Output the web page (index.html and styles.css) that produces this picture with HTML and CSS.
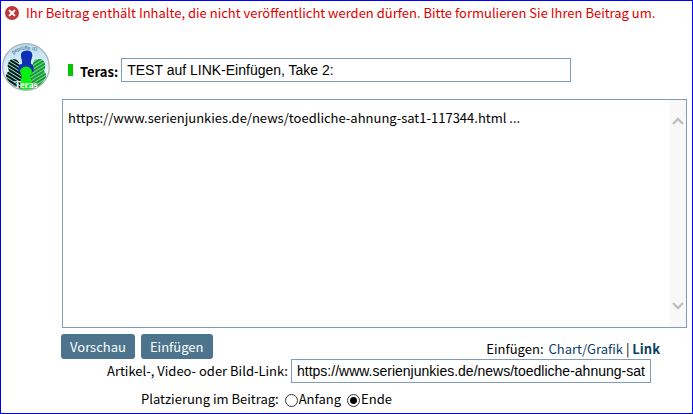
FILE: index.html
```
<!DOCTYPE html>
<html lang="de">
<head>
<meta charset="utf-8">
<meta name="viewport" content="width=device-width, initial-scale=1">
<title>Beitrag schreiben</title>
<link rel="stylesheet" href="styles.css">
</head>
<body>
<form class="page">
  <p class="notice" role="alert">
    <svg class="notice-icon" viewBox="0 0 14 14" aria-hidden="true">
      <circle cx="7" cy="7" r="7" fill="#bd3a3c"/>
      <path d="M4.600 4.600l4.800 4.800M9.400 4.600l-4.800 4.800" stroke="#fff" stroke-width="2" stroke-linecap="round"/>
    </svg>
    <span>Ihr Beitrag enthält Inhalte, die nicht veröffentlicht werden dürfen. Bitte formulieren Sie Ihren Beitrag um.</span>
  </p>

  <div class="author">
    <svg class="avatar" viewBox="0 0 48 50" role="img" aria-label="Teras">
      <defs>
        <linearGradient id="sky" x1="0" y1="0" x2="0" y2="1">
          <stop offset="0" stop-color="#b4dcf4"/>
          <stop offset="0.6" stop-color="#eaf5fb"/>
          <stop offset="1" stop-color="#a9c4bc"/>
        </linearGradient>
        <pattern id="dark" width="3" height="3" patternUnits="userSpaceOnUse" patternTransform="rotate(32)">
          <rect width="3" height="3" fill="#06120f"/>
          <rect width="3" height="1" fill="#7fe0d4"/>
        </pattern>
        <pattern id="green" width="3" height="3" patternUnits="userSpaceOnUse" patternTransform="rotate(-32)">
          <rect width="3" height="3" fill="#129a35"/>
          <rect width="3" height="1" fill="#7fd692"/>
        </pattern>
        <clipPath id="disc"><circle cx="24" cy="25" r="22.5"/></clipPath>
        <path id="arc" d="M11 12Q24 3 40 12"/>
      </defs>
      <circle cx="24" cy="25" r="23.3" fill="url(#sky)" stroke="#a7b4b8" stroke-width="1.2"/>
      <g clip-path="url(#disc)">
        <path d="M20 19Q17 10 22 9Q25 8 28 9Q32 11 29 19L29 22Q36 23 34 32L32 42H16L14 30Q14 22 20 22z" fill="#0b32b4"/>
        <path d="M6 22Q7 17 12 17Q18 18 17 24L16 29Q20 31 20 36V50H8L4 38Q3 32 7 29Q5 25 6 22z" fill="url(#dark)"/>
        <path d="M43 22Q42 17 37 17Q30 17 31 24L32 29Q28 31 28 36V50H40L44 38Q45 32 42 29Q44 25 43 22z" fill="url(#green)"/>
        <path d="M20 34Q16 28 20 26Q24 23 28 26Q32 29 28 34L30 40V50H18V40z" fill="#0cee12"/>
      </g>
      <text class="avatar-arc"><textPath href="#arc">geprüfte ID</textPath></text>
      <text class="avatar-name" x="24" y="46">Teras</text>
    </svg>
    <div class="title-row">
      <span class="status"></span>
      <label class="author-name" for="title">Teras:</label>
      <input class="field title-field" id="title" type="text" value="TEST auf LINK-Einfügen, Take 2:">
    </div>
  </div>

  <div class="editor">
    <div class="editor-box">
      <textarea class="editor-text" aria-label="Beitrag">https://www.serienjunkies.de/news/toedliche-ahnung-sat1-117344.html ...</textarea>
      <div class="scroll" aria-hidden="true">
        <svg class="chevron" viewBox="0 0 12 10"><path d="M1 8l5-5 5 5"/></svg>
        <svg class="chevron" viewBox="0 0 12 10"><path d="M1 2l5 5 5-5"/></svg>
      </div>
    </div>

    <div class="toolbar">
      <button class="button" type="button">Vorschau</button>
      <button class="button" type="button">Einfügen</button>
      <div class="insert"><span>Einfügen:</span><span><a href="#chart">Chart/Grafik</a> | <a class="current" href="#link">Link</a></span></div>
    </div>
  </div>

  <div class="link-row">
    <label for="link">Artikel-, Video- oder Bild-Link:</label>
    <input class="field link-field" id="link" type="text" value="https://www.serienjunkies.de/news/toedliche-ahnung-sat1-117344.html">
  </div>

  <fieldset class="placement">
    <span class="placement-title">Platzierung im Beitrag:</span>
    <label class="choice"><input type="radio" name="place">Anfang</label>
    <label class="choice"><input type="radio" name="place" checked>Ende</label>
  </fieldset>
</form>
</body>
</html>
```

FILE: styles.css
```
* {
  box-sizing: border-box;
}

body {
  margin: 0;
  background: #fff;
  color: #000;
  font: 13px/20px "Noto Sans CJK SC", "Open Sans", sans-serif;
}

.page {
  min-height: 100vh;
  border: 1px solid #00f;
}

.notice {
  display: flex;
  align-items: center;
  gap: 7px;
  margin: 0;
  padding: 2px 4px;
  color: #e00000;
}

.notice-icon {
  flex: none;
  width: 14px;
  height: 14px;
}

.author {
  display: flex;
  align-items: center;
  margin-top: 17px;
  padding-left: 1px;
}

.avatar {
  flex: none;
  width: 48px;
  height: 50px;
}

.avatar-arc {
  font: 5px "Liberation Sans", sans-serif;
  fill: #40515c;
}

.avatar-name {
  font: bold 10px "Liberation Serif", serif;
  fill: #fff;
  text-anchor: middle;
}

.title-row {
  display: flex;
  flex: 1;
  align-items: center;
  min-width: 0;
  padding-top: 6px;
}

.status {
  width: 5px;
  height: 12px;
  margin: 0 7px 0 18px;
  background: #00c800;
}

.author-name {
  margin-right: 3px;
  padding-top: 3px;
  font-weight: bold;
}

.field {
  height: 24px;
  padding: 0 5px;
  border: 1px solid #7f9db9;
  border-radius: 0;
  background: #fff;
  color: #000;
  font: 14px "Liberation Sans", Arial, sans-serif;
}

.title-field {
  flex: 0 1 450px;
  min-width: 0;
}

.editor {
  margin: 7px 5px 0 61px;
}

.editor-box {
  display: flex;
  height: 229px;
  border: 1px solid #7f9db9;
}

.editor-text {
  flex: 1;
  min-width: 0;
  padding: 8px 5px;
  border: 0;
  outline: 0;
  resize: none;
  background: #fff;
  color: #000;
  font: inherit;
  overflow: hidden;
}

.scroll {
  display: flex;
  flex-direction: column;
  justify-content: space-between;
  align-items: center;
  width: 16px;
  padding: 16px 0;
  background: #f8f8f8;
}

.chevron {
  width: 12px;
  height: 10px;
  fill: none;
  stroke: #bfbfbf;
  stroke-width: 2.4;
}

.toolbar {
  display: flex;
  gap: 6px;
  margin: 6px 27px 0 -1px;
}

.button {
  height: 25px;
  padding: 0 9px;
  border: 0;
  border-radius: 3px;
  background: #4c748d;
  color: #fff;
  font: inherit;
}

.insert {
  display: flex;
  gap: 5px;
  margin: 5px 0 0 auto;
}

.insert a {
  color: #0b4063;
  text-decoration: none;
}

.insert .current {
  font-weight: bold;
}

.link-row {
  display: flex;
  justify-content: flex-end;
  align-items: center;
  gap: 3px;
  padding-right: 41px;
}

.link-field {
  flex: 0 1 360px;
  min-width: 0;
}

.placement {
  display: flex;
  align-items: center;
  gap: 6px;
  margin: 6px 0 0;
  padding: 0 0 0 140px;
  border: 0;
}

.choice {
  display: flex;
  align-items: center;
  gap: 1px;
}

.choice input {
  appearance: none;
  width: 13px;
  height: 13px;
  margin: 3px 0 0;
  border: 1px solid #333;
  border-radius: 50%;
  background: #fff;
}

.choice input:checked {
  background: radial-gradient(circle, #000 3px, #fff 4px);
}
```
